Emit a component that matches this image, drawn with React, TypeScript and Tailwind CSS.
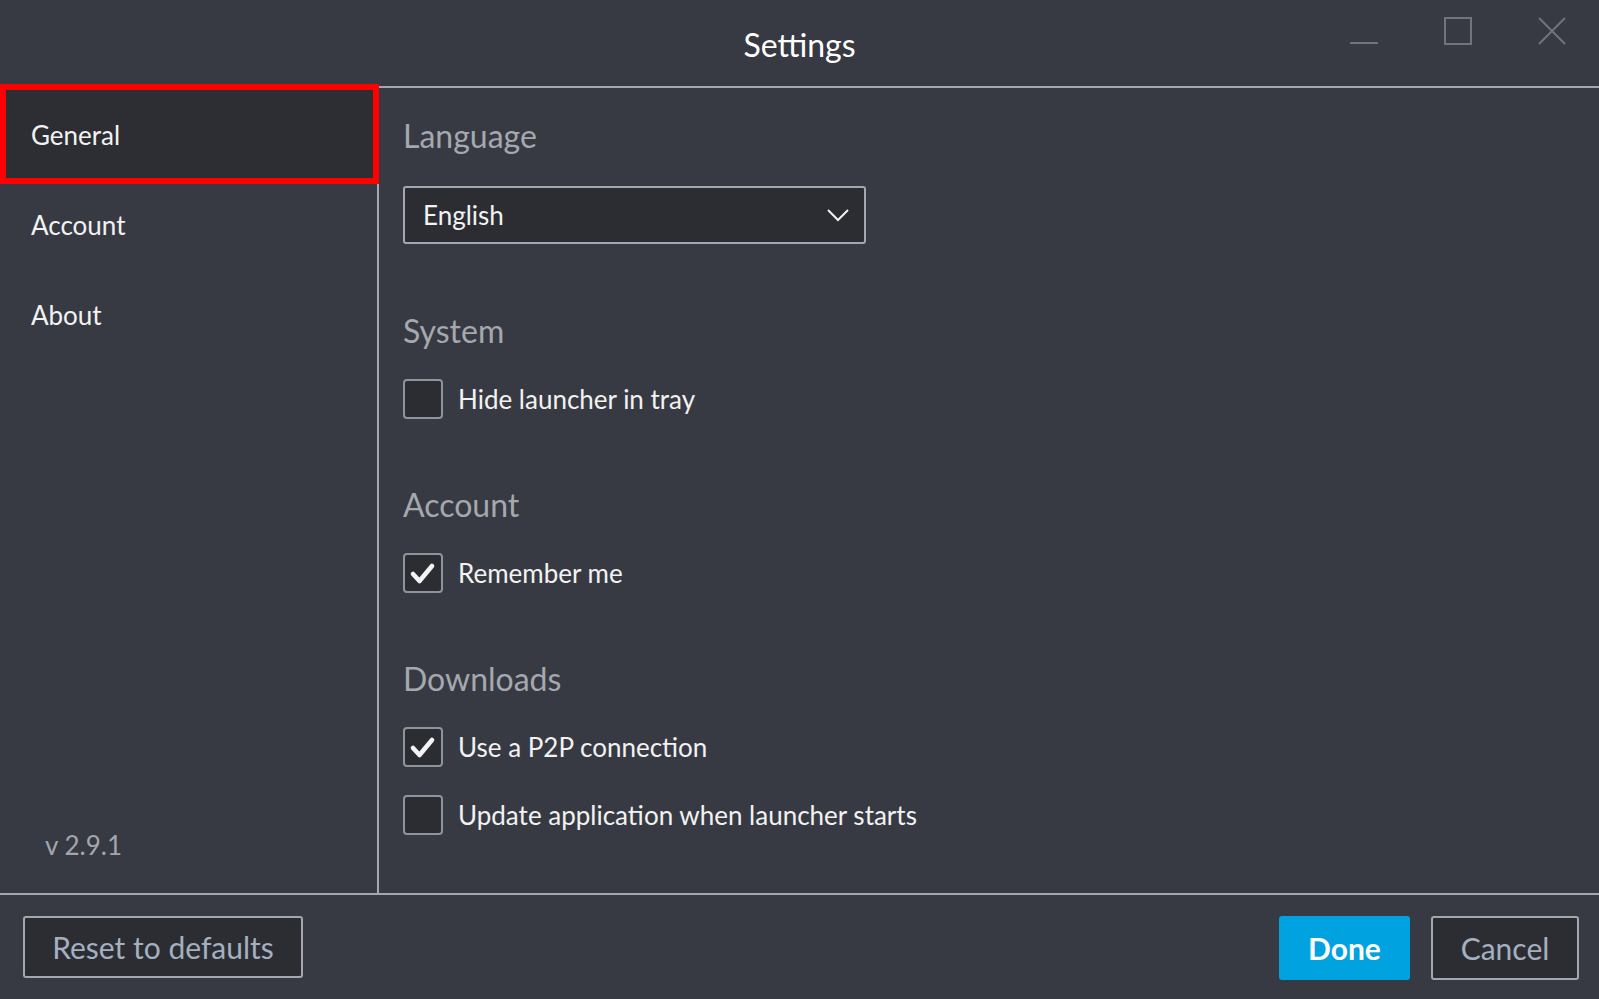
import React from "react";

const Check = () => (
  <svg width="30" height="30" viewBox="0 0 30 30" className="block">
    <polyline points="5,16 11.5,23 24,8" fill="none" stroke="#f4f4f4" strokeWidth="4.6" strokeLinecap="round" strokeLinejoin="round" />
  </svg>
);

function CheckRow({ checked, label }: { checked: boolean; label: string }) {
  return (
    <div className="flex items-center h-[40px]">
      <div className="w-[40px] h-[40px] rounded-[4px] border-2 border-[#8e949c] bg-[#2b2d33] flex items-center justify-center">
        {checked ? <Check /> : null}
      </div>
      <span className="ml-[15px] text-[26px] text-[#f2f2f2] leading-none">{label}</span>
    </div>
  );
}

function Heading({ children }: { children: React.ReactNode }) {
  return <div className="text-[32px] leading-[36px] text-[#a5a8ae]">{children}</div>;
}

export default function App() {
  return (
    <div
      className="w-[1599px] h-[999px] bg-[#373a42] flex flex-col overflow-hidden"
      style={{ fontFamily: "Lato, 'Open Sans', sans-serif" }}
    >
      {/* Title bar */}
      <div className="h-[86px] grid grid-cols-[1fr_auto_1fr] shrink-0">
        <div />
        <div className="text-[32px] text-white pt-[25px] leading-[40px]">Settings</div>
        <div className="flex justify-end items-start pt-[17px] pr-[33px] gap-[66px]">
          <svg width="28" height="28" viewBox="0 0 28 28">
            <line x1="0" y1="26" x2="28" y2="26" stroke="#70757d" strokeWidth="2" />
          </svg>
          <svg width="28" height="28" viewBox="0 0 28 28">
            <rect x="1" y="1" width="26" height="26" fill="none" stroke="#70757d" strokeWidth="2" />
          </svg>
          <svg width="28" height="28" viewBox="0 0 28 28">
            <line x1="1" y1="1" x2="27" y2="27" stroke="#70757d" strokeWidth="2" />
            <line x1="27" y1="1" x2="1" y2="27" stroke="#70757d" strokeWidth="2" />
          </svg>
        </div>
      </div>
      <div className="h-[2px] bg-[#a3a8b0] shrink-0" />

      {/* Middle */}
      <div className="flex flex-1 min-h-0">
        <div className="w-[377px] flex flex-col pt-[2px] pb-[33px]">
          <div className="relative h-[90px] bg-[#2c2e33] flex items-center pl-[31px] text-[26px] text-[#f2f2f2] w-[379px] z-10">
            General
            <div className="absolute left-0 right-0 top-[-6px] bottom-[-4px] border-[6px] border-[#ff0000] pointer-events-none" />
          </div>
          <div className="h-[90px] flex items-center pl-[31px] text-[26px] text-[#f2f2f2]">Account</div>
          <div className="h-[90px] flex items-center pl-[31px] text-[26px] text-[#f2f2f2]">About</div>
          <div className="flex-1" />
          <div className="pl-[45px] text-[26px] text-[#a2a6ad] leading-[30px]">v 2.9.1</div>
        </div>
        <div className="w-[2px] bg-[#a3a8b0]" />
        <div className="flex-1 pl-[24px] pt-[30px] flex flex-col">
          <Heading>Language</Heading>
          <div className="mt-[32px] w-[463px] h-[58px] rounded-[3px] border-2 border-[#a3a8b0] bg-[#2b2d33] flex items-center justify-between pl-[18px] pr-[14px]">
            <span className="text-[26px] text-[#f2f2f2]">English</span>
            <svg width="24" height="14" viewBox="0 0 24 14">
              <polyline points="2,2 12,12 22,2" fill="none" stroke="#f2f2f2" strokeWidth="2" />
            </svg>
          </div>
          <div className="mt-[69px]">
            <Heading>System</Heading>
          </div>
          <div className="mt-[30px]">
            <CheckRow checked={false} label="Hide launcher in tray" />
          </div>
          <div className="mt-[68px]">
            <Heading>Account</Heading>
          </div>
          <div className="mt-[30px]">
            <CheckRow checked label="Remember me" />
          </div>
          <div className="mt-[68px]">
            <Heading>Downloads</Heading>
          </div>
          <div className="mt-[30px]">
            <CheckRow checked label="Use a P2P connection" />
          </div>
          <div className="mt-[28px]">
            <CheckRow checked={false} label="Update application when launcher starts" />
          </div>
        </div>
      </div>
      <div className="h-[2px] bg-[#a3a8b0] shrink-0" />

      {/* Footer */}
      <div className="h-[104px] shrink-0 flex items-start pt-[21px] pl-[23px] pr-[20px]">
        <button className="w-[280px] h-[62px] rounded-[3px] border-2 border-[#a3a8b0] bg-[#2b2d33] text-[30px] text-[#a4b0c0]">
          Reset to defaults
        </button>
        <div className="flex-1" />
        <button className="w-[131px] h-[64px] rounded-[3px] bg-[#00a2df] text-[30px] font-bold text-white">Done</button>
        <button className="ml-[21px] w-[148px] h-[64px] rounded-[3px] border-2 border-[#a3a8b0] bg-[#2b2d33] text-[30px] text-[#a4b0c0]">
          Cancel
        </button>
      </div>
    </div>
  );
}
